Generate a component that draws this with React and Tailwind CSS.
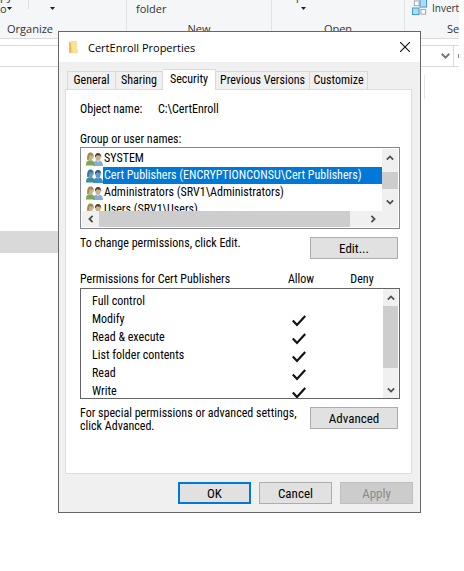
import clsx from "clsx";

const TABS = ["General", "Sharing", "Security", "Previous Versions", "Customize"];
const TAB_WIDTHS = ["w-[49px]", "w-[47px]", "w-[53px]", "w-[94px]", "w-[58px]"];

const PRINCIPALS = [
  "SYSTEM",
  "Cert Publishers (ENCRYPTIONCONSU\\Cert Publishers)",
  "Administrators (SRV1\\Administrators)",
  "Users (SRV1\\Users)",
];

const PERMISSIONS = [
  { name: "Full control", allow: false },
  { name: "Modify", allow: true },
  { name: "Read & execute", allow: true },
  { name: "List folder contents", allow: true },
  { name: "Read", allow: true },
  { name: "Write", allow: true },
];

const ROTATION = { up: "", right: "rotate-90", down: "rotate-180", left: "-rotate-90" };

function Arrow({ dir }) {
  return (
    <svg viewBox="0 0 8 8" className={clsx("size-2", ROTATION[dir])} fill="none" stroke="#505050" strokeWidth="1.8">
      <path d="M.8 5.6 4 2.4l3.2 3.2" />
    </svg>
  );
}

function ScrollButton({ dir, className }) {
  return (
    <button type="button" aria-label={`Scroll ${dir}`} className={clsx("flex shrink-0 items-center justify-center", className)}>
      <Arrow dir={dir} />
    </button>
  );
}

function UsersIcon({ selected }) {
  const c = selected
    ? { hair: "#3f7396", face: "#5c9cc4", left: "#3a8f9c", right: "#3b8bd0", dark: "#2c5674" }
    : { hair: "#a08a4c", face: "#c9b391", left: "#7da650", right: "#86acd8", dark: "#5a4030" };
  return (
    <svg viewBox="0 0 17 14" className="h-[14px] w-[17px] shrink-0">
      <path d="M7 14c0-3 1-5.500 5-5.500s5 2.500 5 5.500z" fill={c.right} />
      <path d="M10.800 8.500h2.400L12 10.800z" fill="#e4ecf4" opacity={selected ? 0.3 : 1} />
      <ellipse cx="12" cy="5.500" rx="2.600" ry="3.300" fill={c.face} />
      <path d="M9 5.500C8.600 2.500 10 1 12 1s3.600 1.500 3.200 5l-.9-2.200-3.300-.6z" fill={c.dark} />
      <path d="M0 13.500c0-3.500 1-5.300 4.300-5.300s4.400 2 4.400 5.300z" fill={c.left} />
      <ellipse cx="4.500" cy="5.200" rx="2.400" ry="3.300" fill={c.face} />
      <path d="M1.200 8c-.3-5 .7-7.500 3.300-7.500S8 2.700 7.600 6.500L6.500 3.700 3.500 3.200 2.700 8z" fill={c.hair} />
    </svg>
  );
}

function DialogButton({ children, className, ...props }) {
  return (
    <button
      type="button"
      className={clsx(
        "h-[22px] shrink-0 border text-center text-[13px]",
        className,
        props.disabled ? "border-[#bfbfbf] bg-[#cccccc] text-[#8b8b8b]" : "bg-[#e1e1e1]",
      )}
      {...props}
    >
      {children}
    </button>
  );
}

function Caret() {
  return (
    <svg viewBox="0 0 5 3" className="h-[3px] w-[5px]" fill="#222">
      <path d="M0 0h5L2.500 3z" />
    </svg>
  );
}

function Ribbon() {
  return (
    <div className="mr-[5px] flex h-[39px] overflow-hidden border-b border-[#dadbdc] bg-[#f5f6f7] font-['Open_Sans',sans-serif] text-[11px] leading-4 text-[#333]">
      <section className="flex w-[127px] shrink-0 flex-col justify-end border-r border-[#e2e3e4] pb-px">
        <div className="flex h-[21px] items-end">
          <div className="flex w-[28px] flex-col pb-[6px] leading-[13px]">
            <span>py</span>
            <span className="flex items-center">o<Caret /></span>
          </div>
          <div className="h-[9px] w-px self-start bg-[#dcdddf]" />
          <div className="flex w-[46px] justify-center pb-[11px]"><Caret /></div>
        </div>
        <h2 className="pl-[7px]">Organize</h2>
      </section>
      <section className="flex w-[145px] shrink-0 flex-col justify-end border-r border-[#e2e3e4] pb-px">
        <div className="h-5 pl-[9px]">folder</div>
        <h2 className="text-center">New</h2>
      </section>
      <section className="flex w-[133px] shrink-0 flex-col justify-end border-r border-[#e2e3e4] pb-px">
        <div className="flex h-[21px] flex-col justify-end pb-[11px] pl-[24px]">
          <span className="leading-[12px]">p</span>
          <div className="pt-[5px] pl-[5px]"><Caret /></div>
        </div>
        <h2 className="text-center">Open</h2>
      </section>
      <section className="flex min-w-0 flex-1 flex-col justify-end pb-px">
        <div className="flex h-[24px] gap-1 pl-[7px]">
          <svg viewBox="0 0 17 16" className="h-4 w-4 shrink-0" strokeWidth="1">
            <rect x="8.500" y="-1" width="7" height="8" fill="#a9dcf8" stroke="#3c93c8" />
            <rect x="2.500" y=".5" width="5" height="5" fill="#fff" stroke="#9aa3aa" />
            <rect x=".5" y="8" width="7" height="7" fill="#a9dcf8" stroke="#3c93c8" />
            <rect x="9.500" y="9.500" width="5" height="5" fill="#fff" stroke="#9aa3aa" />
          </svg>
          <span className="text-[10px] leading-4">Invert</span>
        </div>
        <h2 className="pl-[42px]">Se</h2>
      </section>
    </div>
  );
}

function ExplorerWindow() {
  return (
    <div>
      <Ribbon />
      <div className="mt-[6px] mr-[5px] flex h-[22px] items-center justify-end border-y border-[#d9d9d9]">
        <svg viewBox="0 0 9 6" className="h-[6px] w-[9px]" fill="none" stroke="#777" strokeWidth="2">
          <path d="M.7.8 4.500 4.600 8.300.8" />
        </svg>
        <div className="ml-[3px] flex h-full w-[6px] items-center justify-end border-l border-[#d9d9d9]">
          <div className="h-1 w-px bg-[#888]" />
        </div>
      </div>
      <div className="flex h-[164px] justify-end pt-2 pr-[39px]">
        <div className="h-6 w-px bg-[#e5e5e5]" />
      </div>
      <div className="h-[22px] w-[58px] bg-[#d9d9d9]" />
    </div>
  );
}

function PrincipalList() {
  return (
    <div className="flex h-[82px] flex-col border border-[#828790] p-px">
      <div className="flex min-h-0 flex-1">
        <ul aria-label="Group or user names" className="min-w-0 flex-1 overflow-hidden pt-px">
          {PRINCIPALS.map((name, i) => (
            <li key={name} className="flex h-[17px] items-center pl-1">
              <UsersIcon selected={i === 1} />
              <span className={clsx("h-full flex-1 pl-px leading-[17px] whitespace-nowrap", i === 1 && "bg-[#0078d7] text-white")}>
                {name}
              </span>
            </li>
          ))}
        </ul>
        <div className="flex w-4 flex-col justify-between bg-[#f0f0f0]">
          <ScrollButton dir="up" className="h-[18px]" />
          <div className="h-[17px] bg-[#cdcdcd]" />
          <ScrollButton dir="down" className="h-[18px]" />
        </div>
      </div>
      <div className="flex h-4 bg-[#f0f0f0]">
        <ScrollButton dir="left" className="w-[17px]" />
        <div className="flex-1 bg-[#cdcdcd]" />
        <div className="w-[14px]" />
        <ScrollButton dir="right" className="w-[18px]" />
        <div className="w-4" />
      </div>
    </div>
  );
}

function PermissionTable() {
  return (
    <div>
      <div className="flex h-[18px] leading-[18px]">
        <span className="flex-1">Permissions for Cert Publishers</span>
        <span className="w-[62px] text-center">Allow</span>
        <span className="w-[60px] text-center">Deny</span>
        <span className="w-2" />
      </div>
      <div className="flex h-[111px] border border-[#646464] pr-px">
        <div className="min-w-0 flex-1 overflow-hidden pt-[3px]">
          <table className="w-full table-fixed">
            <tbody>
              {PERMISSIONS.map((p) => (
                <tr key={p.name} className="h-[18px]">
                  <td className="pl-[11px]">{p.name}</td>
                  <td className="w-[36px]">
                    {p.allow && (
                      <svg viewBox="0 0 14 12" role="img" aria-label="Allowed" className="mt-1 h-3 w-[14px]" fill="none" stroke="#111" strokeWidth="2.200">
                        <path d="M.8 5.500 5 10 13.200 1" />
                      </svg>
                    )}
                  </td>
                  <td className="w-[55px]" />
                </tr>
              ))}
            </tbody>
          </table>
        </div>
        <div className="flex w-[15px] flex-col bg-[#f0f0f0]">
          <ScrollButton dir="up" className="h-[17px]" />
          <div className="h-[62px] bg-[#cdcdcd]" />
          <div className="flex-1" />
          <ScrollButton dir="down" className="h-[17px]" />
        </div>
      </div>
    </div>
  );
}

function PropertiesDialog() {
  return (
    <div
      role="dialog"
      aria-labelledby="dialog-title"
      className="absolute top-[31px] left-[58px] w-[363px] border border-[#666] bg-[#f0f0f0] font-['Roboto_Condensed','Liberation_Sans',sans-serif] text-[12px] leading-[13px] text-black"
    >
      <header className="flex h-[30px] items-center bg-white px-[10px]">
        <svg viewBox="0 0 10 13" className="h-[13px] w-[10px]">
          <path d="M0 1h8v11H0z" fill="#f2cf73" />
          <path d="M1 0h7v8l1 1v3H4z" fill="#fbe09a" />
          <path d="M0 1l2 1v10l-2-1z" fill="#e8bd55" />
        </svg>
        <h1 id="dialog-title" className="flex-1 pl-[9px] font-['Open_Sans',sans-serif] text-[11px]">CertEnroll Properties</h1>
        <button type="button" aria-label="Close">
          <svg viewBox="0 0 10 10" className="size-[10px]" stroke="#111" strokeWidth="1.1">
            <path d="M0 0l10 10M10 0 0 10" />
          </svg>
        </button>
      </header>

      <div className="pt-[7px] pr-2 pl-[6px]">
        <div role="tablist" className="flex h-5 items-end pl-[2px]">
          {TABS.map((tab, i) => (
            <button
              key={tab}
              type="button"
              role="tab"
              aria-selected={tab === "Security"}
              className={clsx(
                "border-t border-r border-[#d9d9d9] text-center whitespace-nowrap",
                TAB_WIDTHS[i],
                i === 0 && "border-l",
                tab === "Security" ? "z-10 -mb-px h-[21px] bg-white pb-px" : "h-[18px]",
              )}
            >
              {tab}
            </button>
          ))}
        </div>
        <div role="tabpanel" className="h-[385px] border border-[#dcdcdc] bg-white pt-[11px] pr-[11px] pl-[14px]">
          <dl className="flex h-4 leading-4">
            <dt className="w-[78px]">Object name:</dt>
            <dd>C:\CertEnroll</dd>
          </dl>
          <div className="mt-[14px] h-4 leading-4">Group or user names:</div>
          <PrincipalList />
          <div className="flex h-[41px] justify-between pt-2 pr-[2px]">
            <span>To change permissions, click Edit.</span>
            <DialogButton className="w-[88px] border-[#adadad]">Edit...</DialogButton>
          </div>
          <PermissionTable />
          <div className="flex items-start justify-between pt-2 pr-[2px]">
            <p className="whitespace-nowrap">
              For special permissions or advanced settings,
              <br />
              click Advanced.
            </p>
            <DialogButton className="w-[88px] border-[#adadad]">Advanced</DialogButton>
          </div>
        </div>
      </div>

      <footer className="flex justify-end gap-2 py-2 pr-[7px]">
        <DialogButton className="w-[73px] border-2 border-[#0078d7]">OK</DialogButton>
        <DialogButton className="w-[73px] border-[#adadad]">Cancel</DialogButton>
        <DialogButton className="w-[73px]" disabled>Apply</DialogButton>
      </footer>
    </div>
  );
}

export default function App() {
  return (
    <main className="relative min-h-screen overflow-hidden bg-white">
      <ExplorerWindow />
      <PropertiesDialog />
    </main>
  );
}
